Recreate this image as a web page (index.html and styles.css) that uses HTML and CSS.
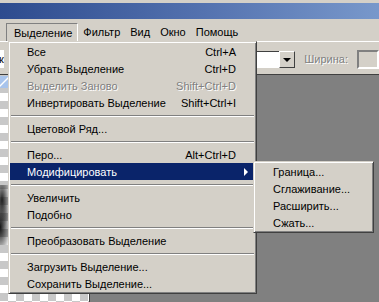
FILE: index.html
```html
<!DOCTYPE html>
<html lang="ru">
<head>
  <meta charset="UTF-8">
  <title>Выделение</title>
  <link rel="stylesheet" href="styles.css">
</head>
<body>
  <div class="window">
    <div class="titlebar"></div>

    <div class="menubar">
      <span class="menubar-item active">Выделение</span>
      <span class="menubar-item">Фильтр</span>
      <span class="menubar-item">Вид</span>
      <span class="menubar-item">Окно</span>
      <span class="menubar-item">Помощь</span>
    </div>

    <div class="options">
      <div class="field-left">к</div>
      <div class="combo">
        <div class="combo-field"></div>
        <div class="combo-button"><span class="tri-down"></span></div>
      </div>
      <span class="option-label">Ширина:</span>
      <div class="option-input"></div>
    </div>

    <div class="workspace">
      <div class="canvas">
        <div class="canvas-icon"></div>
        <div class="canvas-stroke"></div>
      </div>
    </div>

    <div class="menu">
      <div class="item"><span>Все</span><span class="key">Ctrl+A</span></div>
      <div class="item"><span>Убрать Выделение</span><span class="key">Ctrl+D</span></div>
      <div class="item disabled"><span>Выделить Заново</span><span class="key">Shift+Ctrl+D</span></div>
      <div class="item"><span>Инвертировать Выделение</span><span class="key">Shift+Ctrl+I</span></div>
      <div class="sep"></div>
      <div class="item"><span>Цветовой Ряд...</span></div>
      <div class="sep"></div>
      <div class="item"><span>Перо...</span><span class="key">Alt+Ctrl+D</span></div>
      <div class="item selected"><span>Модифицировать</span><span class="arrow"></span></div>
      <div class="sep"></div>
      <div class="item"><span>Увеличить</span></div>
      <div class="item"><span>Подобно</span></div>
      <div class="sep"></div>
      <div class="item"><span>Преобразовать Выделение</span></div>
      <div class="sep"></div>
      <div class="item"><span>Загрузить Выделение...</span></div>
      <div class="item"><span>Сохранить Выделение...</span></div>
    </div>

    <div class="menu submenu">
      <div class="item"><span>Граница...</span></div>
      <div class="item"><span>Сглаживание...</span></div>
      <div class="item"><span>Расширить...</span></div>
      <div class="item"><span>Сжать...</span></div>
    </div>
  </div>
</body>
</html>
```

FILE: styles.css
```css
body {
  margin: 0;
  background-color: #d4d0c8;
  font-family: Tahoma, "Liberation Sans", Arial, sans-serif;
  font-size: 11px;
  color: #000000;
}

.window {
  position: relative;
  width: 379px;
  height: 302px;
  overflow: hidden;
  display: flex;
  flex-direction: column;
}

.titlebar {
  margin-top: 3px;
  height: 16px;
  background: linear-gradient(to right, #2d4b8e, #5573b0 55%, #7898cb);
}

.menubar {
  display: flex;
  height: 22px;
  padding-left: 6px;
  box-sizing: border-box;
  padding-top: 4px;
}

.menubar-item {
  padding: 0 5px;
  line-height: 18px;
}

.menubar-item.active {
  padding: 0 5px 0 7px;
  border-top: 1px solid #808080;
  border-left: 1px solid #808080;
  border-right: 1px solid #ffffff;
}

.options {
  height: 34px;
  border-top: 1px solid #ffffff;
  border-bottom: 1px solid #404040;
  box-sizing: border-box;
  display: flex;
  align-items: flex-start;
  padding-top: 8px;
}

.field-left {
  width: 7px;
  height: 18px;
  line-height: 18px;
  background-color: #ffffff;
  overflow: hidden;
  text-indent: -1px;
}

.combo {
  display: flex;
  margin-left: 154px;
  height: 17px;
  margin-top: 1px;
}

.combo-field {
  width: 120px;
  background-color: #ffffff;
  border-top: 1px solid #404040;
  border-left: 1px solid #404040;
}

.combo-button {
  width: 14px;
  border: 1px solid;
  border-color: #ffffff #404040 #404040 #ffffff;
  background-color: #d4d0c8;
  display: flex;
  align-items: center;
  justify-content: center;
}

.tri-down {
  width: 0;
  height: 0;
  border-left: 4px solid transparent;
  border-right: 4px solid transparent;
  border-top: 4px solid #000000;
}

.option-label {
  margin-left: 9px;
  line-height: 19px;
  color: #808080;
  text-shadow: 1px 1px 0 #ffffff;
}

.option-input {
  margin-left: 9px;
  width: 30px;
  height: 15px;
  border: 2px solid;
  border-color: #808080 #ffffff #ffffff #808080;
}

.workspace {
  flex: 1;
  background-color: #808080;
  display: flex;
}

.canvas {
  position: relative;
  width: 89px;
  border-right: 1px solid #404040;
  background: repeating-conic-gradient(#c8c8c8 0 25%, #ffffff 0 50%) 0 2px / 16px 16px;
}

.canvas-icon {
  height: 12px;
  width: 8px;
  margin-top: 1px;
  background: linear-gradient(135deg, #a8c4ec 40%, #ffffff 50%, #a8c4ec 60%);
}

.canvas-stroke {
  position: absolute;
  left: -4px;
  top: 110px;
  width: 20px;
  height: 60px;
  background: radial-gradient(ellipse at 30% 25%, #202020 0, transparent 45%),
              radial-gradient(ellipse at 20% 70%, #101010 0, transparent 50%);
}

.menu {
  position: absolute;
  left: 8px;
  top: 41px;
  width: 249px;
  padding: 1px 0;
  border: 1px solid;
  border-color: #d4d0c8 #404040 #404040 #d4d0c8;
  box-shadow: inset 1px 1px 0 #ffffff, inset -1px -1px 0 #808080;
  background-color: #d4d0c8;
  box-sizing: border-box;
}

.item {
  display: flex;
  justify-content: space-between;
  align-items: center;
  height: 17px;
  margin: 0 1px;
  padding: 0 19px 0 17px;
  white-space: nowrap;
}

.item.disabled {
  color: #808080;
  text-shadow: 1px 1px 0 #ffffff;
}

.item.selected {
  background-color: #0a246a;
  color: #ffffff;
}

.arrow {
  width: 0;
  height: 0;
  margin-right: -12px;
  border-top: 4px solid transparent;
  border-bottom: 4px solid transparent;
  border-left: 4px solid #ffffff;
}

.sep {
  margin: 4px 2px 3px 2px;
  border-top: 1px solid #808080;
  border-bottom: 1px solid #ffffff;
}

.submenu {
  left: 253px;
  top: 161px;
  width: 121px;
}

.submenu .item {
  padding-left: 18px;
}
```
